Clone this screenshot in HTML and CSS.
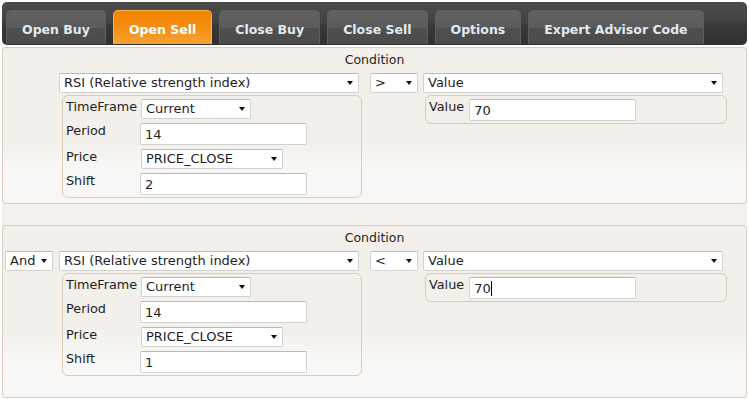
FILE: index.html
```html
<!DOCTYPE html>
<html>
<head>
<meta charset="utf-8">
<link rel="stylesheet" href="styles.css">
</head>
<body>
<div class="app">
  <div class="tabbar">
    <div class="tab">Open Buy</div>
    <div class="tab active">Open Sell</div>
    <div class="tab">Close Buy</div>
    <div class="tab">Close Sell</div>
    <div class="tab">Options</div>
    <div class="tab">Expert Advisor Code</div>
  </div>
  <div class="content">
    <div class="panel p1">
      <div class="title">Condition</div>
      <div class="row">
        <div class="logic-spacer"></div>
        <div class="col col-ind">
          <div class="sel sel-ind"><span>RSI (Relative strength index)</span><i class="arr"></i></div>
          <div class="sub">
            <div class="prm"><span class="lbl">TimeFrame</span><div class="sel sel-tf"><span>Current</span><i class="arr"></i></div></div>
            <div class="prm"><span class="lbl">Period</span><div class="inp inp-wide">14</div></div>
            <div class="prm"><span class="lbl">Price</span><div class="sel sel-price"><span>PRICE_CLOSE</span><i class="arr"></i></div></div>
            <div class="prm"><span class="lbl">Shift</span><div class="inp inp-wide">2</div></div>
          </div>
        </div>
        <div class="sel sel-op"><span>&gt;</span><i class="arr"></i></div>
        <div class="col col-val">
          <div class="sel sel-val"><span>Value</span><i class="arr"></i></div>
          <div class="sub sub-val">
            <div class="prm"><span class="lbl lbl-auto">Value</span><div class="inp inp-wide">70</div></div>
          </div>
        </div>
      </div>
    </div>
    <div class="panel p2">
      <div class="title">Condition</div>
      <div class="row">
        <div class="sel sel-logic"><span>And</span><i class="arr"></i></div>
        <div class="col col-ind">
          <div class="sel sel-ind"><span>RSI (Relative strength index)</span><i class="arr"></i></div>
          <div class="sub">
            <div class="prm"><span class="lbl">TimeFrame</span><div class="sel sel-tf"><span>Current</span><i class="arr"></i></div></div>
            <div class="prm"><span class="lbl">Period</span><div class="inp inp-wide">14</div></div>
            <div class="prm"><span class="lbl">Price</span><div class="sel sel-price"><span>PRICE_CLOSE</span><i class="arr"></i></div></div>
            <div class="prm"><span class="lbl">Shift</span><div class="inp inp-wide">1</div></div>
          </div>
        </div>
        <div class="sel sel-op"><span>&lt;</span><i class="arr"></i></div>
        <div class="col col-val">
          <div class="sel sel-val"><span>Value</span><i class="arr"></i></div>
          <div class="sub sub-val">
            <div class="prm"><span class="lbl lbl-auto">Value</span><div class="inp inp-wide">70<span class="caret"></span></div></div>
          </div>
        </div>
      </div>
    </div>
  </div>
</div>
</body>
</html>
```

FILE: styles.css
```css
* { box-sizing: border-box; }
body {
  margin: 0;
  background: #fff;
  font-family: "DejaVu Sans", Verdana, sans-serif;
  font-size: 12.5px;
  color: #1e1e1e;
}
.app { padding: 2px 2px 0 2px; }

.tabbar {
  height: 43px;
  display: flex;
  align-items: flex-end;
  gap: 7px;
  padding: 0 4px 1px;
  border-radius: 5px;
  background: linear-gradient(#4c4c4c 0%, #434343 45%, #383838 55%, #303030 100%);
}
.tab {
  height: 34px;
  padding: 4px 15px 0;
  display: flex;
  align-items: center;
  font-weight: bold;
  font-size: 12.5px;
  color: #e2eaf2;
  border: 1px solid #5e5e5e;
  border-bottom: 0;
  border-radius: 5px 5px 0 0;
  background: linear-gradient(#626262 0%, #5b5b5b 50%, #4f4f4f 52%, #4b4b4b 100%);
}
.tab.active {
  color: #fff;
  border-color: #fab14a;
  background: linear-gradient(#f38300 0%, #f58e12 50%, #f7a232 100%);
}

.content {
  margin-top: 2px;
  background: #f4f1ec;
}
.panel {
  border: 1px solid #ddcbbd;
  border-radius: 4px;
  padding: 4px 2px 5px;
  background: linear-gradient(#f3f0eb 0%, #f3f0eb 60%, #f8f7f5 76%, #f8f7f5 100%);
}
.p2 { margin-top: 21px; padding-bottom: 21px; }
.title {
  text-align: center;
  line-height: 16px;
  height: 16px;
}
.row {
  display: flex;
  align-items: flex-start;
  margin-top: 5px;
}
.logic-spacer { width: 48px; flex: none; }
.col { display: flex; flex-direction: column; flex: none; }
.col-ind { margin-left: 6px; width: 303px; }
.col-val { margin-left: 5px; width: 304px; }

.sel, .inp {
  background: #fff;
  border: 1px solid #d2d2d2;
  border-top-color: #b9b9b9;
  border-radius: 2px;
  flex: none;
  font-size: 13px;
}
.sel {
  height: 20px;
  display: flex;
  align-items: center;
  justify-content: space-between;
  padding: 0 5px 0 4px;
  line-height: 16px;
}
.arr {
  width: 0;
  height: 0;
  border-left: 3.5px solid transparent;
  border-right: 3.5px solid transparent;
  border-top: 4px solid #111;
  flex: none;
}
.inp {
  height: 22px;
  padding: 1px 4px 0;
  display: flex;
  align-items: center;
  line-height: 16px;
}
.caret {
  display: inline-block;
  width: 1px;
  height: 15px;
  background: #000;
}

.sel-logic { width: 48px; }
.sel-ind { width: 300px; }
.sel-op { width: 48px; margin-left: 8px; }
.sel-val { width: 300px; }
.sel-tf { width: 110px; margin-left: 1px; }
.sel-price { width: 142px; margin-left: 1px; }
.inp-wide { width: 167px; }

.sub {
  margin-top: 2px;
  margin-left: 3px;
  width: 300px;
  border: 1px solid #dccab9;
  border-radius: 6px;
  padding: 3px 3px 2px;
  display: flex;
  flex-direction: column;
  gap: 4px;
}
.sub-val { margin-left: 2px; width: 302px; }
.prm { display: flex; align-items: flex-start; }
.lbl {
  width: 74px;
  flex: none;
  line-height: 15px;
  font-size: 12.8px;
}
.lbl-auto { width: auto; margin-right: 5px; }
```
